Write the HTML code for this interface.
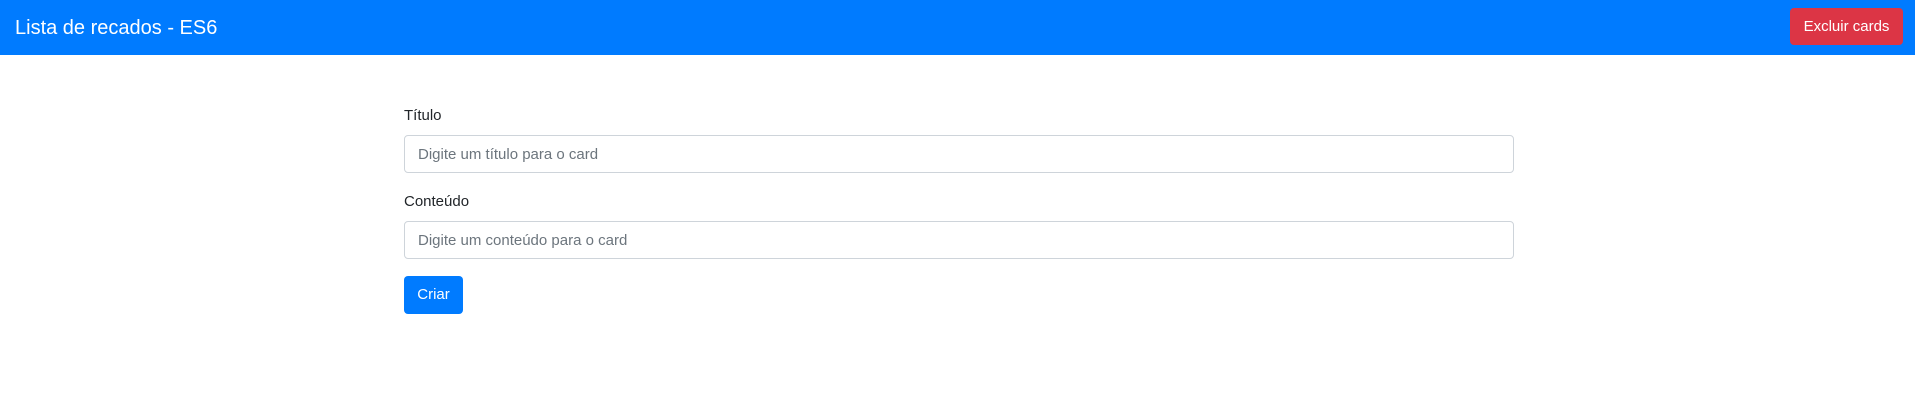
<!DOCTYPE html>
<html><head><meta charset="utf-8"><style>
*{box-sizing:border-box;margin:0;padding:0}
body{width:1915px;height:410px;background:#fff;font-family:"Liberation Sans",sans-serif;color:#212529;position:relative;overflow:hidden}
.nav{position:absolute;left:0;top:0;width:1915px;height:55px;background:#007bff}
.brand{position:absolute;left:15px;top:15px;font-size:20px;color:#fff;line-height:26px}
.del{position:absolute;left:1790px;top:8px;width:113px;height:37px;background:#dc3545;border-radius:4px;color:#fff;font-size:15px;line-height:38px;text-align:center}
.lbl{position:absolute;left:404px;font-size:15px;line-height:20px}
.inp{position:absolute;left:404px;width:1110px;height:38px;border:1px solid #ced4da;border-radius:4px;color:#6c757d;font-size:15px;line-height:38px;padding-left:13px}
.btn{position:absolute;left:404px;top:276px;width:59px;height:38px;background:#007bff;border-radius:4px;color:#fff;font-size:15px;line-height:38px;text-align:center}
</style></head><body>
<div class="nav"><div class="brand">Lista de recados - ES6</div><div class="del">Excluir cards</div></div>
<div class="lbl" style="top:106px">Título</div>
<div class="inp" style="top:135px">Digite um título para o card</div>
<div class="lbl" style="top:192px">Conteúdo</div>
<div class="inp" style="top:221px">Digite um conteúdo para o card</div>
<div class="btn">Criar</div>
</body></html>
